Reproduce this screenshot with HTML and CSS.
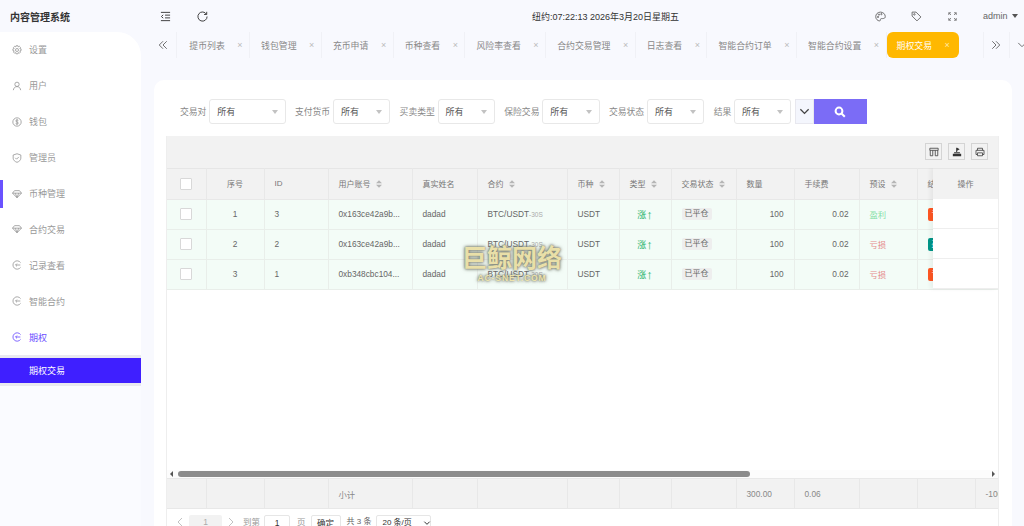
FILE: index.html
```html
<!DOCTYPE html>
<html lang="zh-CN">
<head>
  <meta charset="utf-8"/>
  <title>内容管理系统</title>
  <link rel="stylesheet" href="styles.css">
</head>
<body>
  <svg class="defs" width="0" height="0">
    <symbol id="i-gear" viewBox="0 0 12 12"><circle cx="6" cy="6" r="1.8"/><path d="M5 .8h2l.4 1.500 1.400-.8 1.400 1.400-.8 1.400 1.500.4v2l-1.500.4.8 1.400-1.400 1.400-1.400-.8-.4 1.500H5l-.4-1.500-1.400.8-1.400-1.400.8-1.400-1.500-.4v-2l1.500-.4-.8-1.400 1.400-1.400 1.400.8z"/></symbol>
    <symbol id="i-user" viewBox="0 0 12 12"><circle cx="6" cy="4" r="2.6"/><path d="M1.600 11c.3-2.600 2-4.300 4.400-4.300s4.100 1.700 4.400 4.300"/></symbol>
    <symbol id="i-coin" viewBox="0 0 12 12"><circle cx="6" cy="6" r="5"/><path d="M7.600 4.200C7.200 3.400 4.500 3.300 4.500 4.700c0 1.500 3.100 1 3.100 2.600 0 1.400-2.700 1.300-3.200.5M6 2.500v7"/></symbol>
    <symbol id="i-shield" viewBox="0 0 12 12"><path d="M6 .9l4.600 1.500v3.800c0 2.400-2.100 4.100-4.600 5-2.500-.9-4.600-2.600-4.600-5V2.400z"/><path d="M3.900 5.800l1.600 1.600 2.700-2.700"/></symbol>
    <symbol id="i-gem" viewBox="0 0 12 12"><path d="M3 2h6l2.400 3L6 10.500.6 5zM.6 5h10.800M4 5l2 5.500L8 5"/></symbol>
    <symbol id="i-back" viewBox="0 0 12 12"><path d="M10.300 3.200A5 5 0 1 0 10.300 8.800M4.500 6h5.500M6 4.300L4.300 6 6 7.700"/></symbol>
    <symbol id="i-sort" viewBox="0 0 7 9"><path d="M3.500 0L7 3.500H0zM3.500 9L0 5.500h7z"/></symbol>
  </svg>

  <header class="topbar">
    <div class="brand">内容管理系统</div>
    <div class="top-tools">
      <svg class="top-icon" viewBox="0 0 12 12"><path d="M1 1.500h10M5.500 4.500H11M5.500 7.500H11M1 10.500h10M3.500 4.200L1.500 6l2 1.800"/></svg>
      <svg class="top-icon" viewBox="0 0 12 12"><path d="M10.300 3.500A5 5 0 1 0 11 6M10.600 .9v2.900H7.700"/></svg>
    </div>
    <div class="clock">纽约:07:22:13 2026年3月20日星期五</div>
    <div class="top-right">
      <svg class="top-icon" viewBox="0 0 12 12"><path d="M6 1.200C2.900 1.200.8 3.400.8 6.200c0 2.600 2.100 4.600 4.100 4.600 1.500 0 .6-1.700 1.400-2.300.9-.6 4.900.6 4.900-2.400 0-2.700-2.300-4.900-5.200-4.900z"/><circle cx="3.300" cy="6.500" r=".7"/><circle cx="4.300" cy="3.900" r=".7"/><circle cx="7" cy="3.400" r=".7"/></svg>
      <svg class="top-icon" viewBox="0 0 12 12"><path d="M1.200 1.200h4.300l5.300 5.300-4.300 4.300-5.300-5.300z"/><circle cx="3.700" cy="3.700" r=".8"/></svg>
      <svg class="top-icon small" viewBox="0 0 12 12"><path d="M1 4V1h3M8 1h3v3M11 8v3H8M4 11H1V8M1 1l3 3M11 1L8 4M11 11L8 8M1 11l3-3"/></svg>
      <div class="admin">admin<span class="caret dark"></span></div>
    </div>
  </header>

  <div class="layout">
    <aside class="sidebar">
      <ul class="menu">
        <li><svg class="menu-icon"><use href="#i-gear"/></svg>设置</li>
        <li><svg class="menu-icon"><use href="#i-user"/></svg>用户</li>
        <li><svg class="menu-icon"><use href="#i-coin"/></svg>钱包</li>
        <li><svg class="menu-icon"><use href="#i-shield"/></svg>管理员</li>
        <li class="marked"><svg class="menu-icon"><use href="#i-gem"/></svg>币种管理</li>
        <li><svg class="menu-icon"><use href="#i-gem"/></svg>合约交易</li>
        <li><svg class="menu-icon"><use href="#i-back"/></svg>记录查看</li>
        <li><svg class="menu-icon"><use href="#i-back"/></svg>智能合约</li>
        <li class="open"><svg class="menu-icon"><use href="#i-back"/></svg>期权</li>
      </ul>
      <div class="submenu"><div class="submenu-item">期权交易</div></div>
    </aside>

    <main class="main">
      <nav class="tabs">
        <svg class="tab-arrow first" viewBox="0 0 12 12"><path d="M6 1.500L1.500 6 6 10.500M10.500 1.500L6 6l4.500 4.500"/></svg>
        <div class="tab first">提币列表<i>×</i></div>
        <div class="tab">钱包管理<i>×</i></div>
        <div class="tab">充币申请<i>×</i></div>
        <div class="tab">币种查看<i>×</i></div>
        <div class="tab">风险率查看<i>×</i></div>
        <div class="tab">合约交易管理<i>×</i></div>
        <div class="tab">日志查看<i>×</i></div>
        <div class="tab">智能合约订单<i>×</i></div>
        <div class="tab">智能合约设置<i>×</i></div>
        <div class="tab active">期权交易<i>×</i></div>
        <div class="tab-end">
          <span class="tab-btn"><svg class="tab-arrow" viewBox="0 0 12 12"><path d="M1.500 1.500L6 6l-4.500 4.500M6 1.500L10.500 6 6 10.500"/></svg></span>
          <span class="tab-btn"><svg class="tab-arrow" viewBox="0 0 12 12"><path d="M1.500 3.500L6 8l4.500-4.500"/></svg></span>
        </div>
      </nav>

      <section class="card">
        <form class="filters">
          <label>交易对</label><div class="select wide">所有<span class="caret"></span></div>
          <label>支付货币</label><div class="select">所有<span class="caret"></span></div>
          <label>买卖类型</label><div class="select">所有<span class="caret"></span></div>
          <label>保险交易</label><div class="select">所有<span class="caret"></span></div>
          <label>交易状态</label><div class="select">所有<span class="caret"></span></div>
          <label>结果</label><div class="select">所有<span class="caret"></span></div>
          <div class="more-btn"><svg viewBox="0 0 12 12"><path d="M1.500 3.500L6 8l4.500-4.500"/></svg></div>
          <div class="search-btn"><svg viewBox="0 0 12 12"><circle cx="5" cy="5" r="3.400"/><path d="M7.500 7.500l3.300 3.300"/></svg></div>
        </form>

        <div class="grid">
          <div class="grid-tools">
            <span class="tool"><svg viewBox="0 0 12 12"><path d="M1 1.500h10V4H1zM1.500 4v6.500h3V4M7.500 4v6.500h3V4"/></svg></span>
            <span class="tool"><svg class="solid" viewBox="0 0 12 12"><path d="M1 8.200h10V11H1zM2.500 6.200h7v1.300h-7zM5 1h1.200l3 1.700-3 1.700V6H5z"/></svg></span>
            <span class="tool"><svg viewBox="0 0 12 12"><path d="M3 4V1.500h6V4M3 9H1.200V4h9.600v5H9M3 7h6v3.500H3z"/></svg></span>
          </div>

          <div class="grid-body">
            <table class="grid-table">
              <colgroup>
                <col class="c39"><col class="c58"><col class="c64"><col class="c84"><col class="c65"><col class="c90"><col class="c52"><col class="c52"><col class="c65"><col class="c58"><col class="c65"><col class="c58"><col class="c58"><col class="c58">
              </colgroup>
              <thead>
                <tr>
                  <th><span class="check"></span></th>
                  <th class="center">序号</th>
                  <th>ID</th>
                  <th>用户账号<svg class="sort"><use href="#i-sort"/></svg></th>
                  <th>真实姓名</th>
                  <th>合约<svg class="sort"><use href="#i-sort"/></svg></th>
                  <th>币种<svg class="sort"><use href="#i-sort"/></svg></th>
                  <th>类型<svg class="sort"><use href="#i-sort"/></svg></th>
                  <th>交易状态<svg class="sort"><use href="#i-sort"/></svg></th>
                  <th>数量</th>
                  <th>手续费</th>
                  <th>预设<svg class="sort"><use href="#i-sort"/></svg></th>
                  <th>结果</th>
                  <th></th>
                </tr>
              </thead>
              <tbody>
                <tr>
                  <td><span class="check"></span></td><td class="center">1</td><td>3</td><td>0x163ce42a9b...</td><td>dadad</td>
                  <td>BTC/USDT<small>-30S</small></td><td>USDT</td><td class="center up">涨<span class="up-arrow">↑</span></td><td><span class="tag">已平仓</span></td>
                  <td class="right">100</td><td class="right">0.02</td><td class="win">盈利</td><td><span class="result lose-tag">亏</span></td><td></td>
                </tr>
                <tr>
                  <td><span class="check"></span></td><td class="center">2</td><td>2</td><td>0x163ce42a9b...</td><td>dadad</td>
                  <td>BTC/USDT<small>-30S</small></td><td>USDT</td><td class="center up">涨<span class="up-arrow">↑</span></td><td><span class="tag">已平仓</span></td>
                  <td class="right">100</td><td class="right">0.02</td><td class="lose">亏损</td><td><span class="result win-tag">盈</span></td><td></td>
                </tr>
                <tr>
                  <td><span class="check"></span></td><td class="center">3</td><td>1</td><td>0xb348cbc104...</td><td>dadad</td>
                  <td>BTC/USDT<small>-30S</small></td><td>USDT</td><td class="center up">涨<span class="up-arrow">↑</span></td><td><span class="tag">已平仓</span></td>
                  <td class="right">100</td><td class="right">0.02</td><td class="lose">亏损</td><td><span class="result lose-tag">亏</span></td><td></td>
                </tr>
              </tbody>
            </table>

            <div class="fixed-col">
              <div class="fixed-head">操作</div>
              <div class="fixed-cell"></div>
              <div class="fixed-cell"></div>
              <div class="fixed-cell"></div>
            </div>

            <div class="watermark">巨鲸网络<span>AC-SNET.COM</span></div>
          </div>

          <div class="scrollbar">
            <span class="arrow-left"></span>
            <div class="thumb"></div>
            <span class="arrow-right"></span>
          </div>

          <div class="grid-total">
            <table class="grid-table">
              <colgroup>
                <col class="c39"><col class="c58"><col class="c64"><col class="c84"><col class="c65"><col class="c90"><col class="c52"><col class="c52"><col class="c65"><col class="c58"><col class="c65"><col class="c58"><col class="c58"><col class="c58">
              </colgroup>
              <tfoot>
                <tr>
                  <td></td><td></td><td></td><td>小计</td><td></td><td></td><td></td><td></td><td></td>
                  <td>300.00</td><td>0.06</td><td></td><td></td><td>-100</td>
                </tr>
              </tfoot>
            </table>
          </div>

          <div class="pager">
            <svg class="page-arrow" viewBox="0 0 6 10"><path d="M5 1L1 5l4 4"/></svg>
            <span class="page-now">1</span>
            <svg class="page-arrow" viewBox="0 0 6 10"><path d="M1 1l4 4-4 4"/></svg>
            <span class="page-label goto">到第</span>
            <span class="page-input">1</span>
            <span class="page-label">页</span>
            <span class="page-ok">确定</span>
            <span class="page-count">共 3 条</span>
            <span class="page-size">20 条/页<svg viewBox="0 0 12 12"><path d="M2 4l4 4 4-4"/></svg></span>
          </div>
        </div>
      </section>
    </main>
  </div>
</body>
</html>
```

FILE: styles.css
```css
* {
  box-sizing: border-box;
}
html, body {
  margin: 0;
  height: 526px;
  overflow: hidden;
}
body {
  background: #f8f9fe;
  color: #666;
  font-family: "Liberation Sans", "Noto Sans CJK SC", sans-serif;
  font-size: 9px;
}
.defs {
  position: absolute;
}
svg {
  fill: none;
  stroke: currentColor;
  stroke-width: 1;
}

/* top bar */
.topbar {
  display: flex;
  align-items: center;
  height: 32px;
}
.brand {
  width: 160px;
  padding-left: 10px;
  color: #333;
  font-size: 10px;
  font-weight: bold;
}
.top-tools {
  display: flex;
  gap: 26px;
  width: 372px;
  color: #333;
}
.top-icon {
  width: 11px;
  height: 11px;
}
.clock {
  width: 343px;
  color: #333;
}
.top-right {
  display: flex;
  align-items: center;
  gap: 25px;
  color: #666;
}
.top-icon.small {
  width: 9px;
  height: 9px;
  margin-left: 1px;
}
.admin {
  display: flex;
  align-items: center;
  gap: 4px;
  margin-left: 1px;
}
.caret {
  width: 0;
  height: 0;
  border: 3.5px solid transparent;
  border-top: 4px solid #c2c2c2;
  border-bottom: 0;
}
.caret.dark {
  border-top-color: #555;
}

.layout {
  display: flex;
  height: 494px;
}

/* sidebar */
.sidebar {
  width: 141px;
  flex: none;
  background: #fafbff;
  border-top-right-radius: 24px;
  overflow: hidden;
}
.menu {
  margin: 0;
  padding: 0;
  list-style: none;
  background: #fff;
  color: #999;
}
.menu li {
  display: flex;
  align-items: center;
  position: relative;
  height: 35.9px;
  padding-left: 12px;
}
.menu-icon {
  width: 10px;
  height: 10px;
  margin-right: 7px;
  color: #999;
}
.menu li.marked::before {
  content: "";
  position: absolute;
  left: 0;
  top: 4px;
  width: 3px;
  height: 28px;
  background: #6a52ff;
}
.menu li.open, .menu li.open .menu-icon {
  color: #6a4cff;
}
.submenu {
  padding: 3px 0;
  background: #e9e9f0;
}
.submenu-item {
  height: 25px;
  line-height: 26px;
  padding-left: 29px;
  background: #3f1fff;
  color: #fff;
}

/* tabs */
.main {
  flex: 1;
  min-width: 0;
}
.tabs {
  display: flex;
  align-items: center;
  height: 26px;
  color: #888;
  font-size: 8.900px;
}
.tab-arrow {
  width: 10px;
  height: 10px;
  flex: none;
  color: #555;
}
.tab-arrow.first {
  margin: 0 7.600px 0 17px;
}
.tab {
  display: flex;
  align-items: center;
  height: 26px;
  padding-left: 11px;
  border-right: 1px solid #f0f1f6;
  flex: none;
}
.tab.first {
  padding-left: 12.700px;
  border-left: 1px solid #f0f1f6;
}
.tab i {
  width: 24.300px;
  padding-left: 6px;
  text-align: center;
  color: #bbb;
  font-style: normal;
  font-size: 9px;
}
.tab.active {
  width: 72px;
  padding-left: 10px;
  background: #ffb800;
  border: 0;
  border-radius: 6px;
  color: #fff;
}
.tab.active i {
  color: #ffe9a8;
}
.tab-end {
  display: flex;
  margin-left: 24px;
}
.tab-btn {
  display: flex;
  align-items: center;
  justify-content: center;
  flex: none;
  width: 26px;
  height: 26px;
  border-left: 1px solid #f0f1f6;
}

/* card */
.card {
  height: 474px;
  margin: 22px 12px 0 13px;
  padding: 19px 13px 0 12px;
  background: #fff;
  border-radius: 10px;
}
.filters {
  display: flex;
  align-items: center;
  height: 25px;
  padding-left: 14px;
  color: #888;
}
.filters label {
  margin-right: 2.800px;
  font-size: 8.800px;
}
.select {
  display: flex;
  align-items: center;
  justify-content: space-between;
  width: 57.400px;
  height: 25px;
  margin-right: 9.300px;
  padding: 0 7px;
  background: #fff;
  border: 1px solid #e8e8e8;
  border-radius: 3px;
  color: #555;
}
.select.wide {
  width: 76.400px;
}
.more-btn {
  display: flex;
  align-items: center;
  justify-content: center;
  width: 19.300px;
  height: 25px;
  margin-left: -6px;
  background: #f4f6fd;
  border: 1px solid #e8e8ef;
  color: #444;
}
.more-btn svg {
  width: 11px;
  height: 11px;
  stroke-width: 1.400;
}
.search-btn {
  display: flex;
  align-items: center;
  justify-content: center;
  width: 52.700px;
  height: 25px;
  background: #7b6cf6;
  color: #fff;
}
.search-btn svg {
  width: 12px;
  height: 12px;
  stroke-width: 2;
}

/* table */
.grid {
  margin-top: 12px;
  border-left: 1px solid #eee;
  border-right: 1px solid #eee;
}
.grid-tools {
  display: flex;
  justify-content: flex-end;
  align-items: center;
  gap: 6px;
  height: 31.500px;
  padding-right: 10px;
  background: #f2f2f2;
}
.tool {
  display: flex;
  align-items: center;
  justify-content: center;
  width: 17px;
  height: 17px;
  border: 1px solid #d4d4d4;
  color: #444;
}
.tool svg {
  width: 10px;
  height: 10px;
}
.tool svg.solid {
  fill: #333;
  stroke: none;
}
.grid-body {
  position: relative;
  height: 302.500px;
  overflow: hidden;
}
.grid-table {
  width: 866px;
  table-layout: fixed;
  border-collapse: collapse;
  font-size: 8.300px;
}
.c39 { width: 39px; }
.c52 { width: 52px; }
.c58 { width: 58px; }
.c64 { width: 64px; }
.c65 { width: 65px; }
.c84 { width: 84px; }
.c90 { width: 90px; }
.grid-table th, .grid-table td {
  height: 30px;
  padding: 0 10px;
  border: 1px solid #e9eeea;
  white-space: nowrap;
  overflow: hidden;
  text-align: left;
}
.grid-table tr > :first-child {
  border-left: 0;
  text-align: center;
  padding: 0;
}
.grid-table th {
  height: 31px;
  background: #f2f2f2;
  border-color: #e8e8e8;
  border-top: 1px solid #e6e6e6;
  color: #777;
  font-weight: normal;
  font-size: 8px;
}
.grid-table tbody td {
  background: #f3fcf7;
}
.grid-table tfoot td {
  height: 30px;
  background: #f2f2f2;
  border-color: #e8e8e8;
  color: #888;
}
.grid-table .center {
  text-align: center;
}
.grid-table .right {
  text-align: right;
}
.check {
  display: inline-block;
  width: 12px;
  height: 12px;
  vertical-align: middle;
  background: #fff;
  border: 1px solid #d8d8d8;
  border-radius: 1px;
}
.sort {
  width: 6px;
  height: 8px;
  margin-left: 5px;
  vertical-align: -1px;
  fill: #b5b5b5;
  stroke: none;
}
small {
  color: #aaa;
  font-size: 6.500px;
}
.up {
  color: #1fb36b;
  font-size: 9px;
}
.up-arrow {
  font-size: 13px;
  line-height: 12px;
  vertical-align: -1px;
}
.tag {
  display: inline-block;
  padding: 0 3px;
  line-height: 12px;
  background: #eee;
  border-radius: 2px;
  font-size: 8px;
}
.win {
  color: #86dfa8;
}
.lose {
  color: #e58a8a;
}
.result {
  display: inline-block;
  padding: 0 4px;
  line-height: 13px;
  border-radius: 2px;
  color: #fff;
}
.lose-tag {
  background: #ff5722;
}
.win-tag {
  background: #009688;
}
.fixed-col {
  position: absolute;
  top: 0;
  right: 0;
  width: 65px;
  background: #fff;
  box-shadow: -3px 0 4px rgba(0, 0, 0, 0.05);
}
.fixed-head {
  height: 31px;
  line-height: 31px;
  text-align: center;
  background: #f2f2f2;
  border-top: 1px solid #e6e6e6;
  color: #777;
  font-size: 8px;
}
.fixed-cell {
  height: 30px;
  border-bottom: 1px solid #eee;
}
.watermark {
  position: absolute;
  left: 294px;
  top: 75px;
  width: 102px;
  color: rgba(248, 236, 175, 0.88);
  font-size: 25px;
  font-weight: bold;
  line-height: 30px;
  text-align: center;
  white-space: nowrap;
  text-shadow: 0 0 2px rgba(125, 130, 115, 0.9), 0 0 3px rgba(125, 130, 115, 0.9), 0 0 4px rgba(125, 130, 115, 0.7);
}
.watermark span {
  display: block;
  font-size: 8.500px;
  line-height: 10px;
  letter-spacing: 0.900px;
}

/* scrollbar */
.scrollbar {
  display: flex;
  align-items: center;
  height: 8px;
  padding: 0 3px;
  background: #fcfcfc;
}
.thumb {
  width: 572px;
  height: 6px;
  margin-left: 5px;
  background: #8c8c8c;
  border-radius: 3px;
}
.arrow-left, .arrow-right {
  width: 0;
  height: 0;
  border: 3px solid transparent;
}
.arrow-left {
  border-right-color: #555;
  border-left: 0;
}
.arrow-right {
  margin-left: auto;
  border-left-color: #555;
  border-right: 0;
}
.grid-total {
  overflow: hidden;
  background: #f2f2f2;
}

/* pager */
.pager {
  display: flex;
  align-items: flex-start;
  height: 18px;
  overflow: hidden;
  padding: 6px 0 0 10px;
  color: #999;
  font-size: 8.500px;
  line-height: 14px;
  white-space: nowrap;
}
.page-arrow {
  width: 6px;
  height: 10px;
  margin-top: 2px;
  color: #c2c2c2;
}
.page-now {
  width: 33px;
  height: 14px;
  margin: 0 6px;
  text-align: center;
  background: #f2f2f2;
  border-radius: 2px;
  color: #aaa;
}
.page-label {
  margin: 0 5px 0 7px;
}
.page-label.goto {
  margin: 0 4px 0 9px;
}
.page-input, .page-ok, .page-size {
  height: 20px;
  background: #fff;
  border: 1px solid #e6e6e6;
  border-radius: 2px;
  color: #333;
}
.page-input {
  width: 26px;
  text-align: center;
}
.page-ok {
  width: 30px;
  text-align: center;
}
.page-count {
  margin: 0 5px 0 6px;
  color: #666;
  font-size: 8px;
}
.page-size {
  display: flex;
  gap: 11px;
  width: 55px;
  padding: 0 0 0 5px;
  font-size: 8px;
}
.page-size svg {
  flex: none;
  width: 8px;
  height: 8px;
  margin-top: 3px;
  stroke-width: 1.500;
}
```
